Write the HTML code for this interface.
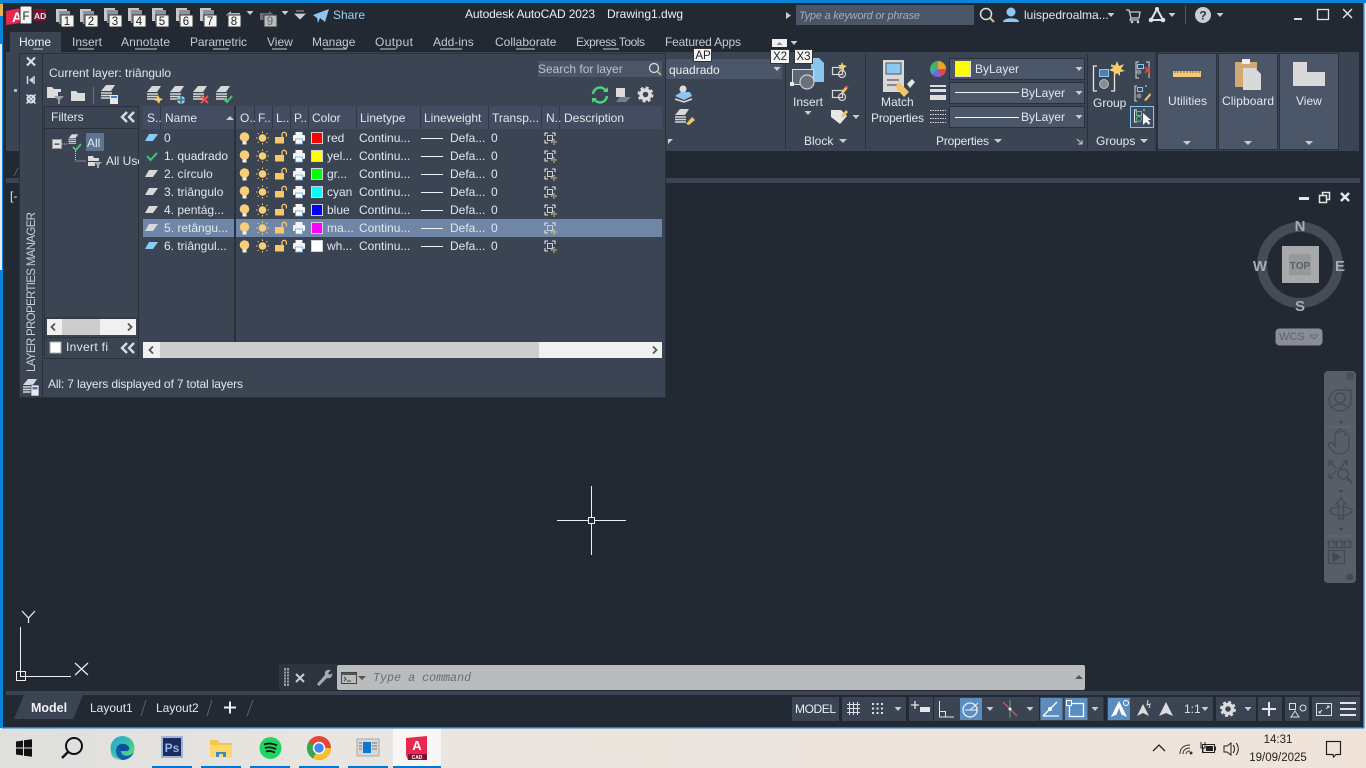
<!DOCTYPE html>
<html><head><meta charset="utf-8"><title>Autodesk AutoCAD 2023</title>
<style>
html,body{margin:0;padding:0;width:1366px;height:768px;overflow:hidden;background:#e9e4df}
svg{position:absolute;left:0;top:0;display:block}
text{font-family:"Liberation Sans",sans-serif;font-size:12px;fill:#e2e7ee;white-space:pre}
.m{fill:#c6cad1}.k{fill:#222;font-size:11.5px;text-anchor:middle}.c{text-anchor:middle}
.g{fill:#cfd3d9}
</style></head><body>
<svg width="1366" height="768" viewBox="0 0 1366 768" xmlns="http://www.w3.org/2000/svg">
<defs>
<g id="bulb"><circle cx="0.500" cy="-1" r="4.800" fill="#f7cf7a"/><rect x="-1.500" y="3.500" width="4" height="3" fill="#f2f2f2"/></g>
<g id="sun"><circle r="3.800" fill="#f7cf7a"/><g stroke="#f7cf7a" stroke-width="1"><path d="M0-6.500V-5M0 5V6.500M-6.500 0H-5M5 0H6.500M-4.800-4.800L-3.800-3.800M3.800 3.800L4.800 4.800M4.800-4.800L3.800-3.800M-3.800 3.800L-4.800 4.800"/></g></g>
<g id="lock"><rect x="-6" y="-1" width="9" height="6.500" fill="#f7c768"/><path d="M1-1V-3.500A2.200 2.200 0 0 1 5.400-3.500V-1.500" fill="none" stroke="#f7c768" stroke-width="1.300"/></g>
<g id="printer"><rect x="-3.500" y="-6" width="7" height="3" fill="#f4f4f4"/><rect x="-6" y="-3" width="12" height="6" rx="1" fill="#f4f4f4"/><rect x="-3.500" y="1" width="7" height="5" fill="#fff" stroke="#6ea9d8" stroke-width=".8"/></g>
<g id="nicon"><path d="M-5-2V-5H-2M2-5H5V-2M-5 2V5H-2" fill="none" stroke="#e6e6e6" stroke-width="1.100"/><rect x="-2.500" y="-2.500" width="5" height="5" fill="none" stroke="#cfcfcf"/><path d="M4 1V7M1 4H7" stroke="#f3c968" stroke-width="1.200" stroke-dasharray="1.500 .6"/></g>
<g id="row"><use href="#bulb" x="244"/><use href="#sun" x="262.500"/><use href="#lock" x="281"/><use href="#printer" x="299"/><use href="#nicon" x="550"/><rect x="421" y="0" width="22" height="1" fill="#f0f3f6"/></g>
<path id="para" d="M0 4L4-3H13L8 4Z"/>
<g id="tri"><path d="M-3.500-2H3.500L0 2Z" fill="#c9ccd1"/></g>
<g id="lay"><path d="M-8 2L-3-4H6L2 2Z" fill="#d8d8d8"/><path d="M-8 4H3M-8 6.500H3M-8 9H3" stroke="#d8d8d8" stroke-width="1.400"/></g>
<g id="tdoc"><rect x="-7" y="-6" width="11" height="13" fill="#c4c6c9"/><rect x="-4" y="-4" width="11" height="13" fill="#8f9298"/></g>
<g id="dbl"><path d="M5-5L0 0L5 5M12-5L7 0L12 5" fill="none" stroke="#d8dce2" stroke-width="2.400"/></g>
</defs>

<!-- base -->
<rect width="1366" height="728" fill="#222933"/>
<rect x="0" y="44" width="2" height="226" fill="#e6eaef"/>
<rect x="1364" y="0" width="2" height="728" fill="#e9edf2"/>
<rect x="0" y="0" width="1366" height="3" fill="#0a84d8"/>
<rect x="2" y="0" width="1" height="728" fill="#0a84d8"/>
<rect x="1363" y="0" width="1.500" height="728" fill="#0a84d8"/>
<rect x="0" y="0" width="2" height="44" fill="#0a84d8"/>
<rect x="0" y="270" width="2" height="458" fill="#0a84d8"/>
<rect x="2" y="727" width="1362" height="1.500" fill="#0a84d8"/>
<rect x="0" y="4" width="3" height="12" fill="#e8b04a"/>

<!-- title bar -->
<path d="M6 11L21 8V23L6 25Z" fill="#e8294f"/>
<text x="12" y="22" style="font-size:14px;font-weight:bold;fill:#fff">A</text>
<rect x="33" y="9" width="13" height="12" fill="#7d1233"/><text x="34" y="19" style="font-size:8.500px;font-weight:bold" fill="#eee">AD</text>
<rect x="20" y="6" width="12" height="18" rx="1" fill="#f5f5f5" stroke="#222"/><text class="k" x="26" y="20">F</text>
<g>
<use href="#tdoc" x="63" y="15"/><use href="#tdoc" x="87" y="15"/><use href="#tdoc" x="111" y="14"/><use href="#tdoc" x="135" y="14"/><use href="#tdoc" x="159" y="14"/><use href="#tdoc" x="183" y="14"/><use href="#tdoc" x="207" y="14"/>
<path d="M226 15L231 11V13H240V20H231V18Z" fill="#b6b8bb"/><path d="M274 15L269 11V13H260V20H269V18Z" fill="#6d7076"/>
</g>
<g font-size="11">
<rect x="61" y="15" width="13" height="12" fill="#f5f5f5" stroke="#333"/><text class="k" x="67" y="25">1</text>
<rect x="85" y="15" width="13" height="12" fill="#f5f5f5" stroke="#333"/><text class="k" x="91" y="25">2</text>
<rect x="109" y="15" width="13" height="12" fill="#f5f5f5" stroke="#333"/><text class="k" x="115" y="25">3</text>
<rect x="133" y="15" width="13" height="12" fill="#f5f5f5" stroke="#333"/><text class="k" x="139" y="25">4</text>
<rect x="156" y="15" width="13" height="12" fill="#f5f5f5" stroke="#333"/><text class="k" x="162" y="25">5</text>
<rect x="180" y="15" width="13" height="12" fill="#f5f5f5" stroke="#333"/><text class="k" x="186" y="25">6</text>
<rect x="204" y="15" width="13" height="12" fill="#f5f5f5" stroke="#333"/><text class="k" x="210" y="25">7</text>
<rect x="228" y="15" width="13" height="12" fill="#f5f5f5" stroke="#333"/><text class="k" x="234" y="25">8</text>
<rect x="264" y="15" width="13" height="12" fill="#b9bbbd" stroke="#333"/><text class="k" x="270" y="25" style="fill:#666">9</text>
</g>
<use href="#tri" x="250" y="13"/><use href="#tri" x="285" y="13"/>
<path d="M296 11H304M295 14H305L300 19Z" fill="#c9ccd1" stroke="#c9ccd1" stroke-width=".8"/>
<path d="M313 15L329 9L325 22L320 18L318 23L317 18Z" fill="#8cc6ef"/>
<text x="333" y="19" style="fill:#9fd0f0">Share</text>
<text x="465" y="18" textLength="130" style="fill:#eceff3">Autodesk AutoCAD 2023</text>
<text x="607" y="18" style="fill:#eceff3">Drawing1.dwg</text>
<path d="M786 12L791 15.500L786 19Z" fill="#c9ccd1"/>
<rect x="796" y="5" width="178" height="20" fill="#4b5568"/>
<text x="799" y="19" textLength="121" style="font-style:italic;fill:#a3abb8;font-size:11px">Type a keyword or phrase</text>
<circle cx="986" cy="14" r="5.500" fill="none" stroke="#dfe1e4" stroke-width="1.500"/><path d="M990 18L994 22" stroke="#d9b982" stroke-width="2"/>
<circle cx="1011" cy="12" r="4.500" fill="#8cc8f2"/><path d="M1003 22C1003 17 1019 17 1019 22Z" fill="#8cc8f2"/>
<text x="1024" y="19" style="fill:#e4e8ee">luispedroalma...</text>
<use href="#tri" x="1111" y="15"/>
<path d="M1126 10H1129L1131 18H1139L1140 12H1130M1131 18L1130 20H1139" fill="none" stroke="#c9ccd1" stroke-width="1.300"/><circle cx="1132" cy="22" r="1.300" fill="#c9ccd1"/><circle cx="1138" cy="22" r="1.300" fill="#c9ccd1"/>
<path d="M1157 9L1151 20H1163Z" fill="none" stroke="#dfe1e4" stroke-width="2"/><circle cx="1157" cy="9" r="2" fill="#dfe1e4"/><circle cx="1151" cy="20" r="2.300" fill="#dfe1e4"/><circle cx="1163" cy="20" r="2.300" fill="#dfe1e4"/>
<use href="#tri" x="1172" y="15"/>
<rect x="1185" y="6" width="1" height="18" fill="#555c68"/>
<circle cx="1203" cy="15" r="8" fill="#c9ccd1"/><text class="c" x="1203" y="19.500" style="fill:#2b313b;font-weight:bold">?</text>
<use href="#tri" x="1220" y="15"/>
<rect x="1294" y="18" width="8" height="2" fill="#d8dade"/>
<rect x="1317.500" y="9.500" width="11" height="10" fill="none" stroke="#dfe1e4" stroke-width="1.300"/>
<path d="M1343 9L1352 18M1352 9L1343 18" stroke="#dfe1e4" stroke-width="1.500"/>

<!-- tabs -->
<rect x="10" y="32" width="51" height="20" fill="#3b4453"/>
<text x="19" y="46" style="fill:#f2f4f7">Home</text>
<text x="72" y="46" class="m">Insert</text>
<text x="121" y="46" class="m" textLength="49">Annotate</text>
<text x="190" y="46" class="m" textLength="57">Parametric</text>
<text x="267" y="46" class="m">View</text>
<text x="312" y="46" class="m">Manage</text>
<text x="375" y="46" class="m" textLength="38">Output</text>
<text x="433" y="46" class="m">Add-ins</text>
<text x="495" y="46" class="m">Collaborate</text>
<text x="576" y="46" class="m" textLength="69">Express Tools</text>
<text x="665" y="46" class="m" textLength="76">Featured Apps</text>
<g fill="#c6cad1"><rect x="33" y="48.500" width="10" height="1"/><rect x="78" y="48.500" width="16" height="1"/><rect x="135" y="48.500" width="22" height="1"/><rect x="213" y="48.500" width="16" height="1"/><rect x="272" y="48.500" width="15" height="1"/><rect x="323" y="48.500" width="24" height="1"/><rect x="380" y="48.500" width="16" height="1"/><rect x="440" y="48.500" width="22" height="1"/><rect x="516" y="48.500" width="19" height="1"/><rect x="603" y="48.500" width="16" height="1"/></g>

<!-- ribbon -->
<rect x="6" y="52" width="1353" height="99" fill="#3b4453"/>
<rect x="6" y="178" width="1354" height="5" fill="#3b4453"/>
<rect x="14" y="89" width="3" height="3" fill="#8cc6ef"/>
<path d="M14 176L18 168" stroke="#555c68"/>
<rect x="666" y="59" width="116" height="20" fill="#4b5669"/>
<text x="669" y="74" style="fill:#eef0f3">quadrado</text><use href="#tri" x="777" y="69"/>
<circle cx="683" cy="89" r="3.500" fill="#dcdcdc"/><path d="M675 96L681 92H690L692 96L684 100Z" fill="#8cc6ef"/><path d="M675 99L684 102L692 99" stroke="#dcdcdc" fill="none" stroke-width="1.500"/>
<use href="#lay" x="683" y="113"/><path d="M686 124L692 117L695 120L689 125Z" fill="#f2c45f"/>
<path d="M668 139H673L668 144Z" fill="#c9ccd1"/>
<rect x="785" y="54" width="1" height="95" fill="#2a303b"/><rect x="865" y="54" width="1" height="95" fill="#2a303b"/><rect x="1087" y="54" width="1" height="95" fill="#2a303b"/><rect x="1155.500" y="52" width="3" height="99" fill="#2a303b"/>

<!-- block -->
<path d="M811 58H819L824 63V82H811Z" fill="#8cc6ef"/>
<rect x="792.500" y="69.500" width="21" height="15" fill="#5f6673" stroke="#dcdcdc"/><rect x="790" y="82" width="4" height="4" fill="#e8e8e8"/>
<circle cx="807" cy="82" r="7" fill="#6b707a" stroke="#c9ccd1" stroke-width="1.200"/>
<text x="793" y="106">Insert</text><use href="#tri" x="808" y="113"/>
<g fill="none" stroke="#d8d8d8" stroke-width="1.200"><rect x="832.500" y="67.500" width="10" height="7"/><circle cx="842" cy="74" r="3.500"/><rect x="832.500" y="90.500" width="10" height="7"/><circle cx="842" cy="97" r="3.500"/></g>
<path d="M842 62L843.500 65L847 66L844 68L844 71L841.500 69L839 70L840 67L838 65L841 65Z" fill="#f6cf6d"/>
<path d="M841 92L846 86L848 88L843 94Z" fill="#f2c45f"/><path d="M846 86L848 88" stroke="#e0405a" stroke-width="2"/>
<path d="M831 110H841L847 116L840 124L831 117Z" fill="#e8e8e8"/><path d="M841 116L846 110L848 112L843 118Z" fill="#f2c45f"/>
<use href="#tri" x="856" y="117"/>
<text x="804" y="145">Block</text><path d="M839 139H847L843 143Z" fill="#c9ccd1"/>

<!-- match props -->
<rect x="883" y="60" width="21" height="32" fill="#d9d9d9"/><rect x="886" y="63" width="15" height="11" fill="#8cc8f2" stroke="#555"/>
<path d="M887 80H899M887 85H899" stroke="#555" stroke-width="1.200"/>
<path d="M899 82L909 92L904 97L895 87Z" fill="#f3c56b"/><path d="M907 84L912 79L915 82L910 88Z" fill="#e6e6e6"/>
<text x="881" y="106">Match</text><text x="871" y="122" textLength="53">Properties</text>

<!-- properties -->
<circle cx="938" cy="69" r="8" fill="#3fb36c"/><path d="M938 69V61A8 8 0 0 1 946 69Z" fill="#f0a030"/><path d="M938 69L946 69A8 8 0 0 1 941 76Z" fill="#e04848"/><path d="M938 69L941 76.500A8 8 0 0 1 932 74Z" fill="#7f5fe0"/><path d="M938 69L932 74A8 8 0 0 1 930 69Z" fill="#3fa0e0"/>
<g fill="#4b5669" stroke="#2a303b" stroke-width="1"><rect x="949.500" y="58.500" width="135" height="21"/><rect x="949.500" y="82.500" width="135" height="21"/><rect x="949.500" y="106.500" width="135" height="21"/></g>
<rect x="955.500" y="61.500" width="15" height="15" fill="#ff0" stroke="#ddd"/>
<text x="975" y="73" >ByLayer</text><text x="1021" y="97">ByLayer</text><text x="1021" y="121">ByLayer</text>
<rect x="955" y="92" width="64" height="1" fill="#f4f4f4"/><rect x="955" y="117" width="64" height="1" fill="#f4f4f4"/>
<use href="#tri" x="1079" y="69"/><use href="#tri" x="1079" y="93"/><use href="#tri" x="1079" y="117"/>
<g fill="#dcdcdc"><rect x="930" y="85" width="16" height="2"/><rect x="930" y="89" width="16" height="3"/><rect x="930" y="95" width="16" height="5"/></g>
<path d="M930 110.500H946M930 114.500H946M930 118.500H946M930 122.500H946" stroke="#dcdcdc" stroke-dasharray="1.500 1"/>
<text x="936" y="145" textLength="53">Properties</text><path d="M994 139H1002L998 143Z" fill="#c9ccd1"/>
<path d="M1077 139L1082 144M1082 140V144H1078" stroke="#c9ccd1" fill="none"/>

<!-- groups -->
<path d="M1097 66H1093.500V91H1097M1111 66H1114.500V91H1111" fill="none" stroke="#e6e6e6" stroke-width="1.300"/>
<rect x="1099.500" y="69.500" width="9" height="7" fill="#4f7fa6" stroke="#8cc6ef"/><circle cx="1104" cy="84" r="4.500" fill="#8a8d93" stroke="#bbb"/>
<path d="M1117 61L1119 66L1124 64L1121 69L1125 71L1120 72L1120 76L1117 73L1114 76L1114 72L1109 70L1113 68L1111 64L1115 66Z" fill="#f6cf6d"/>
<text x="1093" y="107" >Group</text>
<g fill="none" stroke="#d8d8d8" stroke-width="1"><path d="M1139 62H1136V78H1139M1146 62H1149V78"/></g><rect x="1137.500" y="64.500" width="6" height="4" stroke="#8cc6ef" fill="none"/><circle cx="1139" cy="72" r="2.500" fill="#888"/><path d="M1145 67L1150 73M1150 67L1145 73" stroke="#e04848" stroke-width="1.800"/>
<path d="M1137 86H1135V101H1137M1145 86H1147" fill="none" stroke="#d8d8d8"/><rect x="1137.500" y="87.500" width="5" height="4" stroke="#8cc6ef" fill="none"/><circle cx="1139" cy="96" r="2.500" fill="#888"/><path d="M1144 100L1150 93L1151 95L1146 101Z" fill="#f2c45f"/>
<rect x="1130.500" y="106.500" width="23" height="21" fill="#3f4c5f" stroke="#82c4ee"/>
<path d="M1137 110H1134.500V122H1137M1143 110H1145" fill="none" stroke="#e8e8e8"/><rect x="1136.500" y="111.500" width="5" height="4" stroke="#5cc07e" fill="none"/><circle cx="1139" cy="119" r="2.500" fill="none" stroke="#5cc07e"/>
<path d="M1143 113V125L1146 122L1149 125L1150 123L1148 120H1151Z" fill="#f4f4f4"/>
<text x="1096" y="145" >Groups</text><path d="M1140 139H1148L1144 143Z" fill="#c9ccd1"/>

<!-- collapsed panels -->
<g fill="#4b5669" stroke="#2a303b"><rect x="1157.500" y="53.500" width="59" height="96"/><rect x="1218.500" y="53.500" width="59" height="96"/><rect x="1279.500" y="53.500" width="59" height="96"/></g>
<rect x="1173" y="71" width="28" height="6" fill="#f3c978"/><path d="M1175 71V73M1178 71V73M1181 71V73M1184 71V73M1187 71V73M1190 71V73M1193 71V73M1196 71V73M1199 71V73" stroke="#7f6a3f"/>
<text x="1168" y="105" textLength="39">Utilities</text><path d="M1183 141H1191L1187 145Z" fill="#c9ccd1"/>
<rect x="1235" y="62" width="22" height="25" fill="#d1a871"/><rect x="1242" y="59" width="8" height="5" fill="#eee"/>
<path d="M1243 68H1255L1261 74V90H1243Z" fill="#d9d9d9"/>
<text x="1222" y="105" textLength="52">Clipboard</text><path d="M1244 141H1252L1248 145Z" fill="#c9ccd1"/>
<path d="M1293 62H1307V72H1325V86H1293Z" fill="#d9d9d9"/>
<text x="1296" y="105">View</text><path d="M1305 141H1313L1309 145Z" fill="#c9ccd1"/>

<!-- key tips top -->
<rect x="772" y="39" width="15" height="8" fill="#f0f0f0"/><path d="M776.500 45L779.500 42L782.500 45Z" fill="#888"/><use href="#tri" x="794" y="43"/>
<rect x="693.500" y="48.500" width="18" height="13" fill="#f5f5f5" stroke="#333"/><text class="k" x="703" y="59">AP</text>
<rect x="770.500" y="49.500" width="19" height="14" fill="#f5f5f5" stroke="#333"/><text class="k" x="780" y="60">X2</text>
<rect x="794.500" y="49.500" width="18" height="14" fill="#f5f5f5" stroke="#333"/><text class="k" x="803.500" y="60">X3</text>

<!-- dialog -->
<rect x="19.500" y="53.500" width="23" height="344" fill="#3b4453" stroke="#2b313c"/>
<rect x="42.500" y="53.500" width="623" height="344" fill="#3b4453" stroke="#2b313c"/>
<path d="M27 57.500L35 65.500M35 57.500L27 65.500" stroke="#dfe1e4" stroke-width="2"/>
<path d="M27.500 76V84M34 76V84" stroke="#d5d7db" stroke-width="1.500"/><path d="M29 80L33 77V83Z" fill="#d5d7db"/>
<circle cx="31" cy="99" r="3.500" fill="none" stroke="#dfe1e4" stroke-width="2"/><path d="M26.500 94.500L35.500 103.500M35.500 94.500L26.500 103.500" stroke="#dfe1e4" stroke-width="1.500"/>
<text transform="translate(35,372) rotate(-90)" textLength="160" style="font-size:11.500px;fill:#c9ced6">LAYER PROPERTIES MANAGER</text>
<use href="#lay" x="31" y="383"/><rect x="31" y="385" width="8" height="11" fill="#e8e8e8" stroke="#333" stroke-width=".6"/><rect x="32.500" y="387" width="5" height="2.500" fill="#3a83c8"/>

<text x="49" y="77" >Current layer: triângulo</text>
<rect x="538" y="61" width="124" height="16" fill="#4b5669"/>
<text x="538" y="73" style="fill:#b9c0cb">Search for layer</text>
<circle cx="654" cy="68" r="4.500" fill="none" stroke="#e1e3e6" stroke-width="1.200"/><path d="M657 71L661 75" stroke="#d9b982" stroke-width="1.500"/>

<!-- toolbar -->
<path d="M47 87H52L54 89H61V92H47Z" fill="#dcdcdc"/><path d="M47 92H58V98H47Z" fill="#dcdcdc"/><path d="M54 96H64L60 100V104H58V100Z" fill="#9a9ca0"/>
<path d="M71 91H76L78 93H85V101H71Z" fill="#dcdcdc"/>
<rect x="93" y="87" width="1" height="17" fill="#6a7280"/>
<use href="#lay" x="109" y="89"/><rect x="110" y="95" width="8" height="9" fill="#e8e8e8"/><rect x="111" y="96" width="6" height="2" fill="#3a83c8"/>
<use href="#lay" x="155" y="90"/><path d="M158 95L159.500 98L163 99L160 101L159 104L157 101L154 100L157 98Z" fill="#f6cf6d"/>
<use href="#lay" x="178" y="90"/><circle cx="181" cy="100" r="4" fill="#7fd4e6"/><path d="M181 95V105M176 100H186" stroke="#3b4453"/>
<use href="#lay" x="201" y="90"/><path d="M201 96L208 103M208 96L201 103" stroke="#e8534f" stroke-width="2"/>
<use href="#lay" x="224" y="90"/><path d="M224 99L227 102L232 96" fill="none" stroke="#4fc07b" stroke-width="2"/>
<path d="M593 94A7 7 0 0 1 606 91M607 96A7 7 0 0 1 594 99" fill="none" stroke="#4fcf7f" stroke-width="2.500"/><path d="M603 92H608V87Z M597 98H592V103Z" fill="#4fcf7f"/>
<rect x="616" y="88" width="9" height="9" fill="#dcdcdc"/><path d="M616 102L620 97H631L626 102Z" fill="#7a7e85"/>
<circle cx="645.500" cy="94.500" r="4.500" fill="none" stroke="#dcdcdc" stroke-width="3.500"/><circle cx="645.500" cy="94.500" r="7" fill="none" stroke="#dcdcdc" stroke-width="2" stroke-dasharray="3 2.500"/>

<!-- filters -->
<rect x="44.500" y="106.500" width="94" height="252" fill="#3b4453" stroke="#2b313c"/>
<rect x="45" y="128" width="93" height="1" fill="#2b313c"/>
<text x="51" y="121">Filters</text><use href="#dbl" x="122" y="117"/>
<rect x="52.500" y="139.500" width="9" height="9" fill="#e0e0e0" stroke="#999"/><rect x="54.500" y="143.500" width="5" height="1.200" fill="#333"/>
<path d="M62 144H68" stroke="#ccc" stroke-dasharray="1 1"/>
<g transform="translate(74,137) scale(.7)"><use href="#lay"/></g><path d="M73 147L76 150L81 144" fill="none" stroke="#4fc07b" stroke-width="1.800"/>
<rect x="86" y="133" width="18" height="18" fill="#5f7491"/><text x="87" y="147" >All</text>
<path d="M75.500 151V161H86" stroke="#ccc" fill="none" stroke-dasharray="1 1"/>
<path d="M88 156H93L94 158H99V161H88ZM88 162H95V166H88Z" fill="#dcdcdc"/><path d="M94 162H102L99 165V168H97V165Z" fill="#a8aaae"/>
<text x="106" y="165" clip-path="url(#fc)">All Use</text>
<clipPath id="fc"><rect x="100" y="150" width="39" height="20"/></clipPath>
<rect x="45" y="317.500" width="93" height="1" fill="#2b313c"/>
<rect x="47" y="319" width="89" height="16" fill="#f0f0f0"/><rect x="62" y="319" width="38" height="16" fill="#cdcdcd"/>
<path d="M55 323.500L51.500 327L55 330.500M128 323.500L131.500 327L128 330.500" fill="none" stroke="#555" stroke-width="1.800"/>
<rect x="44.500" y="337.500" width="94" height="21" fill="#3b4453" stroke="#2b313c"/>
<rect x="50" y="342" width="11" height="11" fill="#fff" stroke="#aaa"/>
<text x="66" y="351" textLength="42">Invert fi</text><use href="#dbl" x="122" y="348"/>

<!-- layer table -->
<rect x="143" y="106" width="519" height="23" fill="#434c60"/>
<g fill="#323945"><rect x="160" y="106" width="1" height="23"/><rect x="254" y="106" width="1" height="23"/><rect x="272" y="106" width="1" height="23"/><rect x="290" y="106" width="1" height="23"/><rect x="308" y="106" width="1" height="23"/><rect x="356" y="106" width="1" height="23"/><rect x="420" y="106" width="1" height="23"/><rect x="488" y="106" width="1" height="23"/><rect x="541" y="106" width="1" height="23"/><rect x="559" y="106" width="1" height="23"/></g>
<rect x="143" y="219" width="91" height="18" fill="#7086a6"/><rect x="236" y="219" width="426" height="18" fill="#7086a6"/>
<rect x="234" y="106" width="2" height="236" fill="#2b313c"/>
<g style="fill:#e2e7ee">
<text x="147" y="122">S..</text><text x="165" y="122">Name</text><path d="M226 120H234L230 116Z" fill="#c9ccd1"/>
<text x="240" y="122">O..</text><text x="258" y="122">F..</text><text x="276" y="122">L..</text><text x="294" y="122">P..</text>
<text x="312" y="122">Color</text><text x="360" y="122">Linetype</text><text x="424" y="122">Lineweight</text><text x="492" y="122">Transp...</text><text x="546" y="122">N..</text><text x="564" y="122">Description</text>
</g>
<use href="#para" x="145" y="137" fill="#8ec8f4"/>
<path d="M147 156L150.500 160L157 153" fill="none" stroke="#4fc07b" stroke-width="2"/>
<use href="#para" x="145" y="173" fill="#d8d8d8"/><use href="#para" x="145" y="191" fill="#d8d8d8"/><use href="#para" x="145" y="209" fill="#d8d8d8"/><use href="#para" x="145" y="227" fill="#d8d8d8"/>
<use href="#para" x="145" y="245" fill="#8ec8f4"/>
<g>
<use href="#row" y="138"/><use href="#row" y="156"/><use href="#row" y="174"/><use href="#row" y="192"/><use href="#row" y="210"/><use href="#row" y="228"/><use href="#row" y="246"/>
</g>
<g stroke="#d0d4da"><rect x="311.500" y="132.500" width="11" height="11" fill="#f00"/><rect x="311.500" y="150.500" width="11" height="11" fill="#ff0"/><rect x="311.500" y="168.500" width="11" height="11" fill="#0f0"/><rect x="311.500" y="186.500" width="11" height="11" fill="#0ff"/><rect x="311.500" y="204.500" width="11" height="11" fill="#00f"/><rect x="311.500" y="222.500" width="11" height="11" fill="#f0f"/><rect x="311.500" y="240.500" width="11" height="11" fill="#fff"/></g>
<text x="164" y="142">0</text><text x="327" y="142">red</text><text x="359" y="142">Continu...</text><text x="450" y="142">Defa...</text><text x="491" y="142">0</text>
<text x="164" y="160">1. quadrado</text><text x="327" y="160">yel...</text><text x="359" y="160">Continu...</text><text x="450" y="160">Defa...</text><text x="491" y="160">0</text>
<text x="164" y="178">2. círculo</text><text x="327" y="178">gr...</text><text x="359" y="178">Continu...</text><text x="450" y="178">Defa...</text><text x="491" y="178">0</text>
<text x="164" y="196">3. triângulo</text><text x="327" y="196">cyan</text><text x="359" y="196">Continu...</text><text x="450" y="196">Defa...</text><text x="491" y="196">0</text>
<text x="164" y="214">4. pentág...</text><text x="327" y="214">blue</text><text x="359" y="214">Continu...</text><text x="450" y="214">Defa...</text><text x="491" y="214">0</text>
<text x="164" y="232">5. retângu...</text><text x="327" y="232">ma...</text><text x="359" y="232">Continu...</text><text x="450" y="232">Defa...</text><text x="491" y="232">0</text>
<text x="164" y="250">6. triângul...</text><text x="327" y="250">wh...</text><text x="359" y="250">Continu...</text><text x="450" y="250">Defa...</text><text x="491" y="250">0</text>
<rect x="143" y="342" width="519" height="16" fill="#f0f0f0"/><rect x="160" y="342" width="379" height="16" fill="#cdcdcd"/>
<path d="M153 346.500L149.500 350L153 353.500M653 346.500L656.500 350L653 353.500" fill="none" stroke="#555" stroke-width="1.800"/>
<text x="48" y="388" textLength="195">All: 7 layers displayed of 7 total layers</text>

<!-- viewport -->
<text x="10" y="200" >[-</text>
<rect x="1299" y="197" width="10" height="3" fill="#e6e6e6"/>
<rect x="1322.500" y="192.500" width="7" height="7" fill="none" stroke="#e6e6e6" stroke-width="1.500"/><rect x="1319.500" y="195.500" width="7" height="7" fill="#222933" stroke="#e6e6e6" stroke-width="1.500"/>
<path d="M1341 193L1349 201M1349 193L1341 201" stroke="#e6e6e6" stroke-width="2.500"/>
<circle cx="1300" cy="265" r="38" fill="none" stroke="#454c56" stroke-width="10"/>
<rect x="1282" y="246" width="37" height="37" fill="#a8a9aa"/><rect x="1289" y="254" width="22" height="21" fill="#96989a"/>
<text class="c" x="1300" y="269" style="font-size:10px;fill:#5a5f66;font-weight:bold">TOP</text>
<g style="font-weight:bold"><text class="c" x="1300" y="231" style="font-size:15px;font-weight:bold;fill:#a9abad">N</text><text class="c" x="1300" y="311" style="font-size:15px;font-weight:bold;fill:#a9abad">S</text><text class="c" x="1340" y="271" style="font-size:15px;font-weight:bold;fill:#a9abad">E</text><text class="c" x="1260" y="271" style="font-size:15px;font-weight:bold;fill:#a9abad">W</text></g>
<rect x="1275.500" y="328.500" width="47" height="17" rx="4" fill="#8a8d98"/>
<text x="1279" y="340" style="font-size:11px;fill:#5f636e">WCS</text><path d="M1310 335H1318L1314 339Z" fill="none" stroke="#6a6e78"/>

<!-- navbar -->
<rect x="1324" y="371" width="32" height="212" rx="4" fill="#585e66"/>
<path d="M1325 427H1355M1325 536H1355" stroke="#636971"/>
<g fill="none" stroke="#454a52" stroke-width="1.300">
<circle cx="1350" cy="376" r="3.500"/><path d="M1348 374L1352 378M1352 374L1348 378"/>
<path d="M1329 400A10.500 10.500 0 0 1 1340 390H1351V400A11 11 0 0 1 1329 400Z"/><circle cx="1340" cy="398" r="5"/><path d="M1332 408C1335 403 1345 403 1348 408"/>
<path d="M1328 444C1331 441 1333 443 1335 446V434C1335 431 1338 431 1338 434V431C1338 428 1341 428 1341 431V433C1341 430 1345 430 1345 433V436C1345 433 1349 433 1349 436V445C1349 451 1345 454 1340 454C1335 454 1331 451 1328 444Z" transform="translate(0,0)"/>
<path d="M1329 461L1337 469M1329 461H1334M1329 461V466M1347 461L1339 469M1347 461H1342M1347 461V466M1329 478L1336 471M1329 478H1334M1329 478V473"/>
<circle cx="1343" cy="474" r="5"/><path d="M1347 478L1352 483" stroke-width="2.500"/>
<path d="M1341 498L1346 504H1343.500V519H1338.500V504H1336Z"/><ellipse cx="1341" cy="511" rx="11" ry="4.500"/>
<rect x="1328.500" y="541.500" width="6" height="6"/><rect x="1336.500" y="541.500" width="6" height="6"/><rect x="1344.500" y="541.500" width="6" height="6"/><rect x="1328.500" y="550.500" width="16" height="13"/><path d="M1333 553L1340 557L1333 561Z" fill="#454a52"/>
</g>
<g fill="#454a52"><path d="M1338 421H1344L1341 424ZM1338 490H1344L1341 493ZM1338 528H1344L1341 531Z"/></g>
<circle cx="1350" cy="577" r="3.500" fill="#454a52"/>

<!-- crosshair -->
<path d="M557 520.500H588M595 520.500H626M591.500 486V517M591.500 524V555" stroke="#f0f0f0"/>
<rect x="588.500" y="517.500" width="6" height="6" fill="none" stroke="#f0f0f0"/>

<!-- UCS -->
<path d="M20.500 627V676.500H71" fill="none" stroke="#f0f0f0"/>
<rect x="16.500" y="671.500" width="9" height="9" fill="none" stroke="#f0f0f0"/>
<path d="M22 611L28.500 618L35 611M28.500 618V623M75 663L88 675M88 663L75 675" fill="none" stroke="#f0f0f0" stroke-width="1.200"/>

<!-- command line -->
<rect x="279" y="664" width="58" height="26" fill="#2c3440"/>
<g fill="#9aa0aa"><rect x="284" y="668" width="2" height="18" /><rect x="287" y="668" width="2" height="18"/></g>
<path d="M284 671H289M284 674H289M284 677H289M284 680H289M284 683H289" stroke="#2c3440"/>
<path d="M296 674L304 682M304 674L296 682" stroke="#c9ccd1" stroke-width="2"/>
<path d="M317 684L325 675C324 671 327 669 331 670L328 673L330 675L332 673C333 677 330 679 327 678L319 686Z" fill="#a7a9ad"/>
<rect x="337" y="665" width="748" height="25" rx="2" fill="#b9bbbd"/>
<rect x="341.500" y="672.500" width="15" height="11" fill="none" stroke="#444"/><rect x="342" y="673" width="14" height="2" fill="#555"/><path d="M344 677L346 679L344 681M347 681H351" fill="none" stroke="#444"/>
<path d="M358 676H366L362 680Z" fill="#555"/>
<text x="373" y="681" style="font-family:'Liberation Mono',monospace;font-style:italic;font-size:11.700px;fill:#6a6d72">Type a command</text>
<path d="M1075 679H1083L1079 675Z" fill="#555"/>

<!-- layout bar -->
<rect x="6" y="691" width="1354" height="4" fill="#3b4453"/>
<path d="M14 719L24 695H83L73 719Z" fill="#3b4453"/>
<text x="31" y="712" style="font-weight:bold;fill:#f2f4f7;font-size:12.500px">Model</text>
<text x="90" y="712" >Layout1</text><text x="156" y="712" >Layout2</text>
<path d="M141 716L146 700M207 716L212 700M247 716L253 700" stroke="#5a6270"/>
<path d="M224 707.500H236M230 701.500V713.500" stroke="#f0f0f0" stroke-width="2"/>

<!-- status bar -->
<g fill="#3b4453"><rect x="792" y="697" width="47" height="24"/><rect x="842" y="697" width="64" height="24"/><rect x="909" y="697" width="24" height="24"/><rect x="934" y="697" width="105" height="24"/><rect x="1040" y="697" width="63.500" height="24"/><rect x="1107" y="697" width="106" height="24"/><rect x="1216" y="697" width="40" height="24"/><rect x="1258" y="697" width="24" height="24"/><rect x="1285" y="697" width="24" height="24"/><rect x="1312" y="697" width="48" height="24"/></g>
<g fill="#5b8dc0"><rect x="960" y="698" width="22" height="22"/><rect x="1040.500" y="698" width="22" height="22"/><rect x="1065" y="698" width="22.500" height="22"/><rect x="1108" y="698" width="22" height="22"/></g>
<text x="795" y="713" textLength="41" style="fill:#e6f0f8;font-size:12px">MODEL</text>
<path d="M847 704.500H860M847 708.500H860M847 712.500H860M849.500 702V715M853.500 702V715M857.500 702V715" stroke="#dcdfe3"/>
<path d="M872 704H883M872 708.500H883M872 713H883" stroke="#dcdfe3" stroke-width="2" stroke-dasharray="2 2.500"/>
<use href="#tri" x="898" y="709"/>
<path d="M915 701V709M911 705H919" stroke="#e6e6e6" stroke-width="1.300"/><rect x="920" y="707" width="10" height="5" fill="#e6e6e6"/>
<path d="M939.500 701V717H954" fill="none" stroke="#e6e6e6"/><rect x="939.500" y="711.500" width="6" height="5.500" fill="none" stroke="#e6e6e6"/>
<circle cx="970" cy="710" r="7" fill="none" stroke="#f0f0f0" stroke-width="1.300"/><path d="M970 710L978 703M965 710H977" stroke="#f0f0f0"/>
<use href="#tri" x="990" y="709"/>
<path d="M1003 702L1017 716" stroke="#d0545a" stroke-width="1.300"/><path d="M1010 700V718" stroke="#4fb06f"/><circle cx="1010" cy="709" r="1.500" fill="#f0f0f0"/>
<use href="#tri" x="1030" y="709"/>
<path d="M1043 716H1059M1043 716L1057 702" stroke="#fff" stroke-width="1.300" fill="none"/><circle cx="1050" cy="709" r="2" fill="#fff"/>
<rect x="1069.500" y="703.500" width="14" height="13" fill="none" stroke="#fff" stroke-width="1.300"/><rect x="1066.500" y="700.500" width="5" height="5" fill="#5b8dc0" stroke="#fff"/>
<use href="#tri" x="1095" y="709"/>
<path d="M1119 702L1126 716L1119 713L1112 716Z" fill="#fff" stroke="#fff"/><path d="M1119 708L1122 716H1116Z" fill="#5b8dc0"/><circle cx="1126" cy="703" r="2.500" fill="none" stroke="#fff"/>
<path d="M1143 704L1149 716L1143 713L1137 716L1141 708Z" fill="#dcdcdc"/><path d="M1148 700L1147 705L1150 704L1149 708" stroke="#dcdcdc" fill="none"/>
<path d="M1166 702L1173 716L1166 713L1159 716Z" fill="#dcdcdc"/>
<text x="1184" y="713" style="fill:#dfe3e8">1:1</text><use href="#tri" x="1205" y="709"/>
<circle cx="1228" cy="709" r="4.500" fill="none" stroke="#dcdcdc" stroke-width="3.500"/><circle cx="1228" cy="709" r="7" fill="none" stroke="#dcdcdc" stroke-width="2" stroke-dasharray="3 2.500"/>
<use href="#tri" x="1248" y="709"/>
<path d="M1262 709H1276M1269 702V716" stroke="#e6e6e6" stroke-width="2"/>
<rect x="1289.500" y="703.500" width="6" height="6" fill="none" stroke="#dcdcdc"/><circle cx="1303" cy="708" r="3" fill="none" stroke="#dcdcdc"/><path d="M1295 711L1299 717H1291Z" fill="none" stroke="#dcdcdc"/>
<rect x="1316.500" y="703.500" width="15" height="12" fill="none" stroke="#dcdcdc"/><path d="M1319 713L1322 710M1319 713H1321M1319 713V711M1329 706L1326 709M1329 706H1327M1329 706V708" stroke="#dcdcdc"/>
<path d="M1340 703H1356M1340 709H1356M1340 715H1356" stroke="#e6e6e6" stroke-width="2"/>

<!-- taskbar -->
<defs><linearGradient id="tb" x1="0" x2="1"><stop offset="0" stop-color="#dfdfdd"/><stop offset=".25" stop-color="#e9e5e0"/><stop offset="1" stop-color="#f0e4da"/></linearGradient>
<linearGradient id="edge" x1="0" y1="0" x2="1" y2="1"><stop offset="0" stop-color="#2f9fd8"/><stop offset=".55" stop-color="#36c6a0"/><stop offset="1" stop-color="#7ddc6f"/></linearGradient></defs>
<rect x="0" y="728.500" width="1366" height="39.500" fill="url(#tb)"/>
<rect x="393" y="729" width="48" height="39" fill="#f8f7f6"/>
<g fill="#0078d4"><rect x="152" y="766" width="40" height="2"/><rect x="201" y="766" width="40" height="2"/><rect x="250" y="766" width="40" height="2"/><rect x="299" y="766" width="40" height="2"/><rect x="348" y="766" width="40" height="2"/><rect x="393" y="766" width="48" height="2"/></g>
<g fill="#111"><path d="M16 741.500L23 740.500V747.500H16ZM24 740.300L32 739.200V747.500H24ZM16 748.500H23V755.500L16 754.500ZM24 748.500H32V756.700L24 755.700Z"/></g>
<circle cx="74" cy="746" r="8" fill="none" stroke="#111" stroke-width="2"/><path d="M68 752L62 758" stroke="#111" stroke-width="2.500"/>
<circle cx="122.500" cy="748" r="12" fill="url(#edge)"/>
<path d="M111 751C111 758 117 760 122 760C117 757 114 752 117 747C119 744 124 743 127 745C123 745 120 748 121 752C122 757 130 757 134 752C132 757 128 760 122 760C116 760 111 757 110.500 748Z" fill="#0f5fb0"/>
<path d="M117 747C119 743 125 743 128 746C130 748 130 750 127 751H121C120 749 118 748 117 747Z" fill="#0d4f9c"/>
<rect x="161" y="736" width="22" height="22" fill="#9fb4d6"/><rect x="163" y="738" width="18" height="18" fill="#1e2a5c"/><text x="172" y="752" class="c" style="fill:#8fb8f0;font-weight:bold;font-size:12px">Ps</text>
<path d="M210 740H218L220 743H232V757H210Z" fill="#f4c74e"/><rect x="210" y="745" width="22" height="12" fill="#fbd96a"/><path d="M216 752H226V757H223V754H219V757H216Z" fill="#3b8ad0"/>
<circle cx="270.500" cy="748" r="11" fill="#1ed760"/><path d="M264 744.500C268 743 273 743.500 277 745.500M265 748C268 747 272.500 747.500 276 749M266 751.500C269 750.500 272 751 275 752.500" fill="none" stroke="#111" stroke-width="1.800"/>
<circle cx="319" cy="748" r="12" fill="#e8453c"/><path d="M319 748L308.600 742A12 12 0 0 0 313 758.400Z" fill="#34a853"/><path d="M319 748L313 758.400A12 12 0 0 0 331 748Z" fill="#fbc02d"/><path d="M319 748L331 748" stroke="#fbc02d"/><path d="M325 741A12 12 0 0 0 331 748H325Z" fill="#e8453c"/><circle cx="319" cy="748" r="5.500" fill="#4285f4" stroke="#fff" stroke-width="1.500"/>
<rect x="357" y="739" width="22" height="17" fill="#d8d8d8" stroke="#aaa"/><rect x="363" y="742" width="8" height="11" fill="#0a78d4"/><path d="M359 743H362M359 746H362M359 749H362M372 743H377M372 746H377M372 749H377" stroke="#777"/>
<path d="M406 738L427 736V755L411 760H408L406 755Z" fill="#e8294f"/><path d="M408 754H427V760H408Z" fill="#7d1233"/>
<text x="417" y="750" class="c" style="font-weight:bold;fill:#fff;font-size:13px">A</text>
<text x="417" y="759" class="c" style="font-size:5px;font-weight:bold;fill:#fff">CAD</text>
<path d="M1153 751L1159 745L1165 751" fill="none" stroke="#222" stroke-width="1.300"/>
<path d="M1180 754C1180 748 1184 745 1190 745M1183 754C1183 750 1186 748 1190 748M1186 754C1186 752 1188 751 1190 751" fill="none" stroke="#333"/><circle cx="1191" cy="753" r="1.500" fill="#333"/>
<rect x="1202.500" y="744.500" width="12" height="8" fill="none" stroke="#222"/><rect x="1206" y="746" width="7" height="5" fill="#222"/><path d="M1201 742V748H1205V742M1203 748V752" stroke="#222" fill="none"/><rect x="1214.500" y="746.500" width="1.500" height="4" fill="#222"/>
<path d="M1224 746H1227L1231 743V755L1227 752H1224Z M1233 745C1235 747 1235 751 1233 753M1236 743C1239 746 1239 752 1236 755" fill="none" stroke="#222"/>
<text x="1278" y="743" class="c" style="fill:#222;font-size:11.500px">14:31</text>
<text x="1278" y="761" class="c" style="fill:#222;font-size:11.500px">19/09/2025</text>
<path d="M1326.500 741.500H1340.500V754.500H1336L1333.500 757L1333 754.500H1326.500Z" fill="none" stroke="#222" stroke-width="1.200"/>
</svg>
</body></html>
